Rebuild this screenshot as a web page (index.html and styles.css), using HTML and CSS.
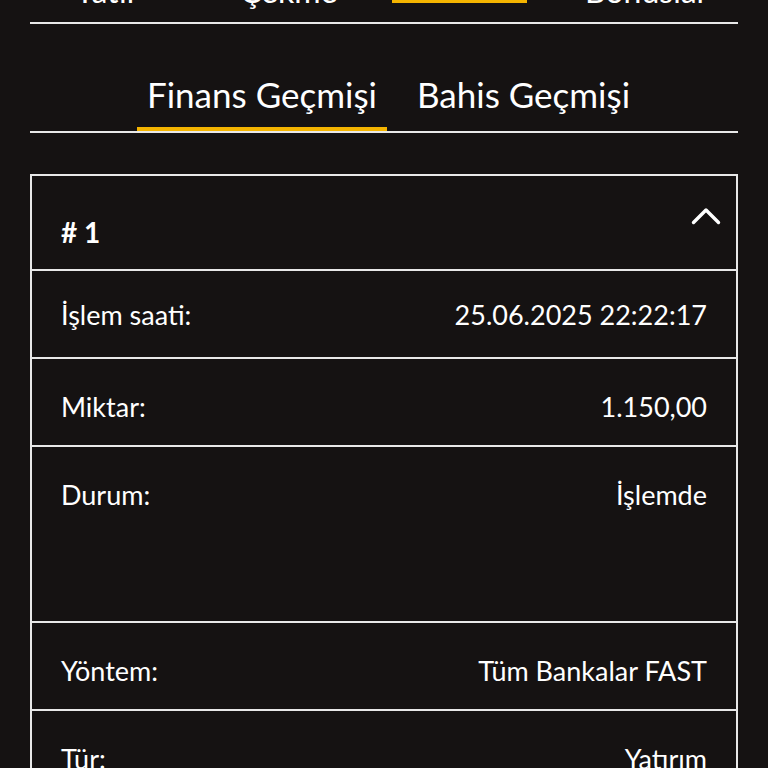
FILE: index.html
```html
<!DOCTYPE html>
<html lang="tr">
<head>
<meta charset="utf-8">
<link rel="stylesheet" href="styles.css">
</head>
<body>
<div class="page">
  <nav class="main-tabs">
    <div class="main-tab">Yatır</div>
    <div class="main-tab">Çekme</div>
    <div class="main-tab active">Geçmiş</div>
    <div class="main-tab">Bonuslar</div>
  </nav>
  <nav class="sub-tabs">
    <div class="sub-tab active">Finans Geçmişi</div>
    <div class="sub-tab">Bahis Geçmişi</div>
  </nav>
  <section class="card">
    <div class="card-head">
      <span class="card-title"># 1</span>
      <svg class="chev" viewBox="0 0 30 20" width="30" height="20"><path d="M2.5 16.5 L15 4 L27.5 16.5" fill="none" stroke="#fff" stroke-width="3.4" stroke-linecap="round" stroke-linejoin="round"/></svg>
    </div>
    <div class="row first"><span>İşlem saati:</span><span>25.06.2025 22:22:17</span></div>
    <div class="row"><span>Miktar:</span><span>1.150,00</span></div>
    <div class="row tall"><span>Durum:</span><span>İşlemde</span></div>
    <div class="row"><span>Yöntem:</span><span>Tüm Bankalar FAST</span></div>
    <div class="row"><span>Tür:</span><span>Yatırım</span></div>
  </section>
</div>
</body>
</html>
```
FILE: styles.css
```css
html, body {
  margin: 0;
  padding: 0;
  background: #151212;
  color: #fff;
  font-family: Lato, "Open Sans", sans-serif;
  overflow: hidden;
}
.page {
  padding: 0 30px;
}
.main-tabs {
  display: grid;
  grid-template-columns: 165px 152px 193px auto;
  align-items: start;
  margin-top: -40px;
  height: 49px;
  padding: 13px 0 0 45px;
  border-bottom: 2px solid #e8e8e8;
  font-size: 32px;
  line-height: 36px;
}
.main-tab {
  white-space: nowrap;
}
.main-tab.active {
  background: #f4b400;
  color: #151212;
  width: 135px;
  height: 43px;
  margin-top: -13px;
  text-align: center;
  line-height: 36px;
}
.sub-tabs {
  display: flex;
  justify-content: center;
  gap: 20px;
  margin-top: 49px;
  border-bottom: 2px solid #e8e8e8;
  font-size: 35px;
  padding-left: 9px;
}
.sub-tab {
  padding: 0 10px 12px;
  line-height: 42px;
  border-bottom: 4px solid transparent;
  white-space: nowrap;
}
.sub-tab.active {
  border-bottom-color: #f4b400;
}
.card {
  margin-top: 41px;
  border: 2px solid #e8e8e8;
  border-bottom: none;
}
.card-head {
  box-sizing: border-box;
  height: 95px;
  display: flex;
  justify-content: space-between;
  align-items: flex-start;
  padding: 0 15px 0 29px;
  border-bottom: 2px solid #e8e8e8;
}
.card-title {
  font-weight: 700;
  font-size: 28px;
  line-height: 34px;
  margin-top: 39px;
}
.chev {
  margin-top: 30px;
}
.row {
  box-sizing: border-box;
  height: 88px;
  display: flex;
  justify-content: space-between;
  align-items: flex-start;
  padding: 32px 29px 0;
  border-bottom: 2px solid #e8e8e8;
  font-size: 27px;
  line-height: 32px;
}
.row.first {
  padding-top: 28px;
}
.row.tall {
  height: 176px;
}
```
